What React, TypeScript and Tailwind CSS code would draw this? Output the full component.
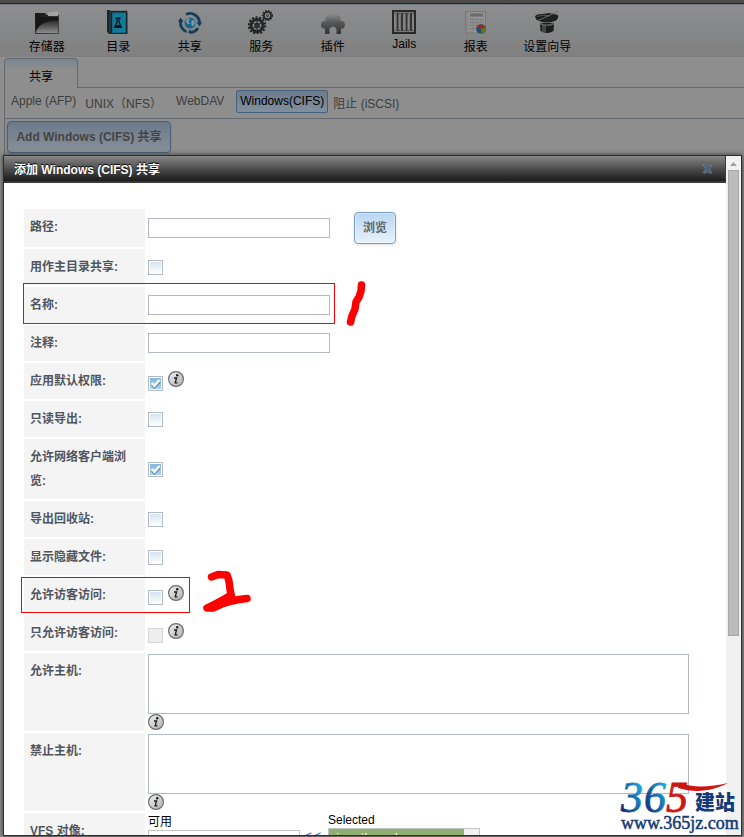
import { useState } from "react";
import type { ReactNode } from "react";

const StorageIcon = () => (
  <svg width="24" height="24" viewBox="0 0 24 24" aria-hidden="true">
    <defs>
      <linearGradient id="folder" x1="0" y1="0" x2="1" y2="1">
        <stop offset="0" stopColor="#161616" />
        <stop offset="1" stopColor="#4a4a4a" />
      </linearGradient>
      <linearGradient id="folderShine" x1="0" y1="0" x2="0" y2="1">
        <stop offset="0" stopColor="#2d2d2d" />
        <stop offset="1" stopColor="#8c8c8c" />
      </linearGradient>
    </defs>
    <path d="M13 2.5 L23 1 V8 H13Z" fill="#9d9d9d" />
    <path d="M0 3 H10 L12 5 H24 V24 H0Z" fill="url(#folder)" />
    <path d="M13 6 V2.5 L17 2 L18 1.5 L23 2 V6Z" fill="#a3a3a3" />
    <path d="M1 7 H23 V11 C12 10 5 14 1 21Z" fill="#171717" />
    <path d="M1 22 C4 14 12 10 23 11 V23 H1Z" fill="url(#folderShine)" />
  </svg>
);

const DirectoryIcon = () => (
  <svg width="24" height="24" viewBox="0 0 24 24" aria-hidden="true">
    <path d="M1 0 H20 L21.500 2 V24 H3 L1 22Z" fill="#16262d" />
    <path d="M6 2.500 H20 V23 H6Z" fill="#0e6a86" />
    <path d="M7 3.500 H19 V22 H7Z" fill="#15799a" />
    <path d="M4 1 V23" stroke="#3a4246" strokeWidth="1" />
    <path d="M4 0.500 H20" stroke="#747a7c" strokeWidth="1" />
    <path d="M9 8 H15 M11 8 V12 L8.500 17.500 H15.500 L13 12 V8" fill="none" stroke="#06141a" strokeWidth="1.200" />
    <path d="M10 15 H14 L15 17.500 H9Z" fill="#06141a" />
  </svg>
);

const SharingIcon = () => (
  <svg width="24" height="24" viewBox="0 0 24 24" aria-hidden="true">
    <g fill="none" stroke="#163d57" strokeWidth="2.800">
      <path d="M8 4.400 A9.500 9.500 0 0 1 21.500 13" />
      <path d="M20 18 A9.500 9.500 0 0 1 12 22.500" />
      <path d="M8.500 21.800 A9.500 9.500 0 0 1 2.700 11" />
    </g>
    <path d="M18.500 12.500 H24 L21.500 16.500Z M13 19.500 V24 L9.500 22.300Z M0 12 L2.500 7.500 L5.500 11.500Z" fill="#163d57" />
    <circle cx="12" cy="13" r="5.500" fill="#1c6289" />
    <path d="M7.500 10.500 L10 8 L12 9 L10.500 11.500 L12 14 L9.500 14Z M13.500 10.500 L16 10 L17 13.500 L14.500 16.500 L13 14Z" fill="#7899ab" />
  </svg>
);

const ServicesIcon = () => (
  <svg width="26" height="24" viewBox="0 0 26 24" aria-hidden="true">
    <g fill="none" stroke="#262626">
      <circle cx="9" cy="15.500" r="8" strokeWidth="2.500" strokeDasharray="2 1.600" />
      <circle cx="9" cy="15.500" r="6" strokeWidth="3" />
      <circle cx="9" cy="15.500" r="2" strokeWidth="1.500" />
      <path d="M9 10 V21 M4.500 12.500 L13.500 18.500 M13.500 12.500 L4.500 18.500" strokeWidth="1" />
      <circle cx="19.500" cy="5.500" r="4.800" strokeWidth="1.500" strokeDasharray="1.600 1.200" />
      <circle cx="19.500" cy="5.500" r="3.600" strokeWidth="1.800" />
      <circle cx="19.500" cy="5.500" r="1" strokeWidth="1" />
    </g>
  </svg>
);

const PluginsIcon = () => (
  <svg width="24" height="24" viewBox="0 0 24 24" aria-hidden="true">
    <defs>
      <linearGradient id="puzzle" x1="0" y1="0" x2="0" y2="1">
        <stop offset="0" stopColor="#8b8b8b" />
        <stop offset="0.450" stopColor="#555" />
        <stop offset="1" stopColor="#333" />
      </linearGradient>
    </defs>
    <path
      d="M8 4 H16 Q19 4.500 19.500 8 V11 Q20.500 10.500 22 11 Q24 12 24 15 Q24 18 22 18.500 Q20.500 19 20 18 V24 H15.500 V19 Q14.500 16.500 12 16.500 Q9.500 16.500 8.500 19 V24 H4 V18 Q3.500 19 2 18.500 Q0 18 0 15 Q0 12 2 11 Q3.500 10.500 4.500 11 V8 Q5 4.500 8 4Z"
      fill="url(#puzzle)"
    />
  </svg>
);

const JailsIcon = () => (
  <svg width="24" height="24" viewBox="0 0 24 24" aria-hidden="true">
    <path d="M1 1 H23 V23 H1Z" fill="#858585" stroke="#292929" strokeWidth="2" />
    <path d="M2.500 3.500 H21.500 M2.500 20.500 H21.500" stroke="#555" strokeWidth="1.500" />
    <path d="M5.500 3 V21 M10 3 V21 M14.500 3 V21 M19 3 V21" stroke="#343434" strokeWidth="2" />
    <path d="M4 3 V21 M8.500 3 V21 M13 3 V21 M17.500 3 V21" stroke="#777" strokeWidth="1" />
  </svg>
);

const ReportIcon = () => (
  <svg width="24" height="24" viewBox="0 0 24 24" aria-hidden="true">
    <path d="M1.500 1.500 H21.500 V23 H1.500Z" fill="#929292" stroke="#777" />
    <path d="M3 2 V23" stroke="#707070" strokeDasharray="1 1" />
    <path d="M6 5 H19" stroke="#6c6c6c" strokeWidth="3" />
    <path d="M5 9.500 H20 M5 12.500 H20 M5 15.500 H20 M5 18.500 H14 M9 9 V21 M13 9 V21 M17 9 V16" stroke="#808080" />
    <circle cx="17" cy="19" r="4.800" fill="#234d75" />
    <path d="M17 19 L12.500 17 A5 5 0 0 1 21.500 17.500Z" fill="#96301d" />
    <path d="M17 19 L21.500 17.500 A5 5 0 0 1 17.500 24Z" fill="#567b23" />
  </svg>
);

const WizardIcon = () => (
  <svg width="24" height="24" viewBox="0 0 24 24" aria-hidden="true">
    <path d="M5 13 H19 L18.500 21 Q12 25 5.500 21Z" fill="#1c1c1c" />
    <path d="M8 15 V22 M10 15 V22.500" stroke="#555" strokeWidth="1.500" />
    <path d="M5 13.500 Q12 17 19 13.500" fill="none" stroke="#5f5f5f" strokeWidth="1.500" />
    <path d="M0 7 Q0 4 7 4 L14 3 L23 5 Q24 9 20 11 Q12 14 4 11 Q1 10 0 7Z" fill="#1f1f1f" />
    <path d="M2 6.500 Q9 4 15 6" fill="none" stroke="#555" />
    <path d="M3 10.500 L23 1.500" stroke="#6c6c6c" strokeWidth="1" />
  </svg>
);

const InfoIcon = () => (
  <svg width="16" height="16" viewBox="0 0 16 16" className="block" role="img" aria-label="info">
    <defs>
      <linearGradient id="info" x1="0" y1="0" x2="1" y2="1">
        <stop offset="0" stopColor="#f4f4f4" />
        <stop offset="0.500" stopColor="#cfcfcf" />
        <stop offset="1" stopColor="#b5b5b5" />
      </linearGradient>
    </defs>
    <circle cx="8" cy="8" r="7.400" fill="url(#info)" stroke="#6b6b6b" strokeWidth="1.200" />
    <circle cx="9.200" cy="4.200" r="1.200" fill="#1c1c1c" />
    <path d="M6 7 H8.600 L7.200 11.800 H9.500" fill="none" stroke="#1c1c1c" strokeWidth="1.300" />
  </svg>
);

const menu = [
  { label: "存储器", icon: <StorageIcon /> },
  { label: "目录", icon: <DirectoryIcon /> },
  { label: "共享", icon: <SharingIcon /> },
  { label: "服务", icon: <ServicesIcon /> },
  { label: "插件", icon: <PluginsIcon /> },
  { label: "Jails", icon: <JailsIcon /> },
  { label: "报表", icon: <ReportIcon /> },
  { label: "设置向导", icon: <WizardIcon /> },
];

function Row({ label, id, tall, children }: { label: string; id: string; tall?: boolean; children: ReactNode }) {
  return (
    <div className={tall ? "flex min-h-[38px] gap-[3px]" : "flex min-h-9 gap-[3px]"}>
      <label
        htmlFor={id}
        className="w-[121px] shrink-0 bg-[#f4f4f4] p-1.5 leading-6 font-bold text-[#50565f]"
      >
        {label}
      </label>
      <div className="flex min-w-0 flex-1 items-center">{children}</div>
    </div>
  );
}

function TextBox({ id }: { id: string }) {
  return <input id={id} type="text" className="h-5 w-[182px] border border-[#b3b8c8] bg-white px-1 outline-none" />;
}

function CheckBox({ id, on, disabled, info }: { id: string; on?: boolean; disabled?: boolean; info?: boolean }) {
  const [checked, setChecked] = useState(!!on);
  return (
    <div className="flex items-start gap-[5px]">
      <span className={info ? "relative mt-[5px] block size-[15px]" : "relative block size-[15px]"}>
        <input
          id={id}
          type="checkbox"
          checked={checked}
          disabled={disabled}
          onChange={(e) => setChecked(e.target.checked)}
          className="block size-[15px] appearance-none border border-[#b3b8c8] bg-linear-to-b from-[#d0e2ef] to-white inset-ring inset-ring-white checked:from-[#7fb5de] checked:to-[#b4d6ec] disabled:border-[#d5d5d5] disabled:from-[#eee] disabled:to-[#eee] disabled:inset-ring-[#eee]"
        />
        {checked && (
          <svg width="15" height="15" viewBox="0 0 15 15" className="pointer-events-none absolute inset-0">
            <path d="M4 8.500 L6.500 11.500 L12 5.500" fill="none" stroke="#3f7fb3" strokeWidth="2" />
            <path d="M3.800 7 L6.500 9.800 L11.500 4" fill="none" stroke="#fff" strokeWidth="2.500" />
          </svg>
        )}
      </span>
      {info && <InfoIcon />}
    </div>
  );
}

function HostsArea({ id }: { id: string }) {
  return (
    <div className="w-full py-px">
      <textarea id={id} className="block h-[60px] w-full resize-none border border-[#b3b8c8] bg-white outline-none" />
      <InfoIcon />
    </div>
  );
}

function Scrollbar() {
  return (
    <div className="flex w-[15px] shrink-0 flex-col items-center bg-[#f1f1f1]">
      <svg width="15" height="14" viewBox="0 0 15 14" className="shrink-0">
        <path d="M4 10 L7.500 6 L11 10Z" fill="#a0a0a0" />
      </svg>
      <div className="h-[466px] w-[11px] border border-[#a8a8a8] bg-[#bcbcbc]" />
    </div>
  );
}

function Marks() {
  return (
    <svg width="400" height="640" viewBox="0 0 400 640" className="pointer-events-none absolute top-0 left-0">
      <g fill="none" stroke="#f00">
        <rect x="23.500" y="283.500" width="311" height="40" />
        <rect x="21.500" y="577.500" width="168" height="35" />
        <g strokeWidth="7.500" strokeLinecap="round" strokeLinejoin="round">
          <path d="M361.500 285 L361 291 L359 297 L356 302 L355 309 L352 316 L350.500 322" />
          <path d="M211.500 577 L218 574.500 L227 575 L229 581 L230 589 L231.500 597 L221 601 L213 605 L207 608 L213 608 L222 604 L232 601 L239 599.500 L247 598.500" />
          <path d="M218 603 L231 595" />
        </g>
      </g>
    </svg>
  );
}

function Watermark() {
  return (
    <svg
      width="126"
      height="56"
      viewBox="0 0 126 56"
      className="pointer-events-none absolute right-0 bottom-0"
      role="img"
    >
      <defs>
        <linearGradient id="blue" x1="0" y1="1" x2="1" y2="0">
          <stop offset="0.100" stopColor="#17246b" />
          <stop offset="0.500" stopColor="#1565a8" />
          <stop offset="0.900" stopColor="#23b3e6" />
        </linearGradient>
      </defs>
      <g fontFamily="'Liberation Serif', serif" fontStyle="italic" fontSize="44" strokeWidth="0.800">
        <text x="3" y="31" fill="url(#blue)" stroke="url(#blue)">3</text>
        <text x="26" y="31" fill="url(#blue)" stroke="url(#blue)">6</text>
        <text x="48" y="31" fill="#cf1512" stroke="#cf1512">5</text>
      </g>
      <path d="M61 2 C76 7 92 6 110 2 C96 9 80 13 60 7Z" fill="#cf1512" />
      <text x="77" y="29" fontFamily="'Noto Sans CJK SC', sans-serif" fontWeight="900" fontSize="20" fill="#153a78">
        建站
      </text>
      <text x="3" y="48" fontFamily="'Liberation Serif', serif" fontSize="18" fill="#153a78" stroke="#153a78" strokeWidth="0.500">
        www.365jz.com
      </text>
    </svg>
  );
}

export default function App() {
  return (
    <div className="relative flex h-screen flex-col overflow-hidden bg-[#8e8e8e] font-['Liberation_Sans','Noto_Sans_CJK_SC',sans-serif] text-[12px] leading-normal text-black">
      <div className="h-[5px] shrink-0 border-b border-[#6d7681] bg-linear-to-b from-[#4f4a4c] from-70% to-[#24282c] to-80%" />

      <nav className="h-[52px] shrink-0 bg-linear-to-b from-[#8c8e90] to-[#808080] pt-[5px] pl-[11px]">
        <div className="grid w-[572px] grid-cols-8">
          {menu.map((item) => (
            <a key={item.label} href="#" className="flex flex-col items-center gap-[3px] [line-height:normal]">
              {item.icon}
              {item.label}
            </a>
          ))}
        </div>
      </nav>

      <div className="shrink-0 pt-px pl-1">
        <div className="flex border-[#646a74]">
          <button className="h-[30px] w-[74px] rounded-t-sm border border-b-0 border-[#646a74] bg-linear-to-b from-[#78858f] to-[#8e8e8e] to-35% pt-1.5">
            共享
          </button>
          <div className="flex-1 border-b border-[#646a74]" />
        </div>
        <div className="border-l border-[#646a74]">
          <div className="flex h-[31px] items-start gap-[9px] border-b border-[#646a74] pt-0.5 pl-1.5 text-[#3c3c3c] [line-height:normal]">
            <a href="#" className="pt-1">Apple (AFP)</a>
            <a href="#" className="mr-[5px] pt-1">UNIX（NFS）</a>
            <div className="flex gap-3">
              <a href="#" className="pt-1">WebDAV</a>
              <div className="flex gap-[5px]">
                <a
                  href="#"
                  className="h-[23px] rounded-xs border border-[#46627e] bg-linear-to-b from-[#6b7c8e] to-[#82909d] px-[3px] pt-[3px] text-black"
                >
                  Windows(CIFS)
                </a>
                <a href="#" className="pt-1">阻止 (iSCSI)</a>
              </div>
            </div>
          </div>
          <div className="h-9 pt-0.5 pl-0.5">
            <button className="h-8 w-[164px] rounded border border-[#46627e] bg-linear-to-b from-[#6b7a8b] to-[#899097] font-bold text-[#444] shadow-sm">
              Add Windows (CIFS) 共享
            </button>
          </div>
        </div>
      </div>

      <div
        role="dialog"
        aria-labelledby="dialog-title"
        className="mr-0.5 mb-px ml-[3px] flex min-h-0 flex-1 border border-[#2e2e2e] bg-white shadow-[0_0_5px_#333]"
      >
        <div className="flex min-w-0 flex-1 flex-col">
          <div className="flex h-[27px] shrink-0 items-center justify-between border-r border-b-2 border-[#3a3838] bg-linear-to-b from-[#888] to-[#1c1c1c] pr-3 pl-2.5">
            <h1 id="dialog-title" className="pt-0.5 font-bold text-white text-shadow-[0_-1px_1px_#000]">
              添加 Windows (CIFS) 共享
            </h1>
            <button aria-label="close">
              <svg width="11" height="10" viewBox="0 0 11 10">
                <path
                  d="M1 1 H4 L5.500 2.500 L7 1 H10 L7.500 5 L10 9 H7 L5.500 7.500 L4 9 H1 L3.500 5Z"
                  fill="#46627f"
                  stroke="#8c8c8c"
                  strokeDasharray="1 1"
                />
              </svg>
            </button>
          </div>

          <form className="flex min-h-0 flex-1 flex-col gap-0.5 overflow-hidden pt-[26px] pr-[37px] pl-5 *:shrink-0">
            <Row label="路径:" id="path" tall>
              <TextBox id="path" />
              <button
                type="button"
                className="ml-6 h-8 w-[42px] rounded border border-[#769dc0] bg-linear-to-b from-[#bad6f3] to-[#e6f2fd] font-bold text-[#666] shadow-sm inset-ring inset-ring-white/40"
              >
                浏览
              </button>
            </Row>
            <Row label="用作主目录共享:" id="home">
              <CheckBox id="home" />
            </Row>
            <Row label="名称:" id="name">
              <TextBox id="name" />
            </Row>
            <Row label="注释:" id="comment">
              <TextBox id="comment" />
            </Row>
            <Row label="应用默认权限:" id="perms">
              <CheckBox id="perms" on info />
            </Row>
            <Row label="只读导出:" id="readonly">
              <CheckBox id="readonly" />
            </Row>
            <Row label="允许网络客户端浏览:" id="browsable">
              <CheckBox id="browsable" on />
            </Row>
            <Row label="导出回收站:" id="recycle">
              <CheckBox id="recycle" />
            </Row>
            <Row label="显示隐藏文件:" id="hidden">
              <CheckBox id="hidden" />
            </Row>
            <Row label="允许访客访问:" id="guest">
              <CheckBox id="guest" info />
            </Row>
            <Row label="只允许访客访问:" id="guestonly">
              <CheckBox id="guestonly" disabled info />
            </Row>
            <Row label="允许主机:" id="allow">
              <HostsArea id="allow" />
            </Row>
            <Row label="禁止主机:" id="deny">
              <HostsArea id="deny" />
            </Row>
            <Row label="VFS 对像:" id="vfs">
              <div className="flex items-start self-start">
                <div className="w-[152px]">
                  <label htmlFor="vfs" className="block pt-0.5 leading-[15px]">可用</label>
                  <select
                    id="vfs"
                    multiple
                    className="block h-20 w-full overflow-y-scroll border border-[#c4c4c4] pt-px text-[13px] text-[#222]"
                  >
                    <option>acl_tdb</option>
                  </select>
                </div>
                <button type="button" className="w-7 pt-3 pr-1 text-[16px] text-[#4a7bab]">
                  &lt;&lt;
                </button>
                <div className="w-[152px]">
                  <label htmlFor="selected" className="block leading-[15px]">Selected</label>
                  <div className="flex h-20 border border-[#c4c4c4] bg-[#f1f1f1]">
                    <select id="selected" multiple className="w-[135px] overflow-hidden bg-[#8fae72] pt-px text-[13px] text-white">
                      <option>aio_pthread</option>
                    </select>
                  </div>
                </div>
              </div>
            </Row>
          </form>
        </div>
        <Scrollbar />
      </div>

      <Marks />
      <Watermark />
    </div>
  );
}
